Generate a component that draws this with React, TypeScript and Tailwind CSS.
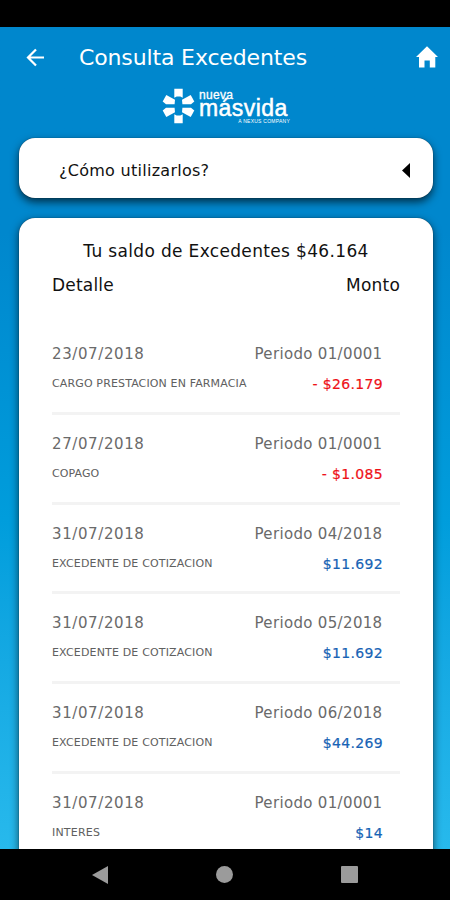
import React from "react";

type Entry = {
  date: string;
  period: string;
  detail: string;
  detailClass: string;
  amount: string;
  negative?: boolean;
};

const entries: Entry[] = [
  { date: "23/07/2018", period: "Periodo 01/0001", detail: "CARGO PRESTACION EN FARMACIA", detailClass: "tracking-[0.14px]", amount: "- $26.179", negative: true },
  { date: "27/07/2018", period: "Periodo 01/0001", detail: "COPAGO", detailClass: "tracking-[0.1px]", amount: "- $1.085", negative: true },
  { date: "31/07/2018", period: "Periodo 04/2018", detail: "EXCEDENTE DE COTIZACION", detailClass: "tracking-[0.16px]", amount: "$11.692" },
  { date: "31/07/2018", period: "Periodo 05/2018", detail: "EXCEDENTE DE COTIZACION", detailClass: "tracking-[0.16px]", amount: "$11.692" },
  { date: "31/07/2018", period: "Periodo 06/2018", detail: "EXCEDENTE DE COTIZACION", detailClass: "tracking-[0.16px]", amount: "$44.269" },
  { date: "31/07/2018", period: "Periodo 01/0001", detail: "INTERES", detailClass: "tracking-[0.2px]", amount: "$14" },
];

function Logo() {
  return (
    <div className="flex h-[36px] shrink-0 items-start justify-center gap-[4px] pl-[2px] text-white">
      <svg width="33" height="36" viewBox="0 0 33 36" fill="currentColor">
        <path d="M12.300 0.800h8.400v9l-2.400-1.300h-3.600l-2.400 1.300z" />
        <path d="M12.300 35.200h8.400v-9l-2.400 1.300h-3.600l-2.400-1.300z" />
        <path d="M4.300 7l8.700 4.700-.4 4.500H4L0.700 13.500z" />
        <path d="M28.700 7L20 11.700l.4 4.500H29l3.300-2.700z" />
        <path d="M4.300 29l8.700-4.700-.4-4.500H4L0.700 22.500z" />
        <path d="M28.700 29L20 24.300l.4-4.500H29l3.300 2.700z" />
      </svg>
      <div className="flex w-[91px] flex-col whitespace-nowrap font-['Liberation_Sans',sans-serif]">
        <span className="mt-[1px] h-[11px] text-[12px] leading-[12px] tracking-[0.3px] [-webkit-text-stroke:0.3px_white]">nueva</span>
        <span className="h-[19px] text-[23px] leading-[16px] tracking-[0.45px] [-webkit-text-stroke:0.5px_white]">másvida</span>
        <span className="self-end text-[5px] leading-[5px] tracking-[0.25px]">A NEXUS COMPANY</span>
      </div>
    </div>
  );
}

function Row({ entry }: { entry: Entry }) {
  return (
    <li className="flex h-[89.8px] shrink-0 flex-col border-b-[3px] border-[#f3f3f3] pt-[19px]">
      <div className="flex items-center justify-between pr-[17.5px] text-[15px] leading-[20px] text-[#6a6a6a]">
        <span className="tracking-[0.6px]">{entry.date}</span>
        <span className="tracking-[0.33px]">{entry.period}</span>
      </div>
      <div className="mt-[10px] flex items-center justify-between pr-[17px] leading-[20px]">
        <span className={`text-[11px] text-[#606060] ${entry.detailClass}`}>{entry.detail}</span>
        <span className={`text-[14px] tracking-[0.35px] [-webkit-text-stroke:0.2px_currentColor] ${entry.negative ? "text-[#ee1118]" : "text-[#1763b5]"}`}>{entry.amount}</span>
      </div>
    </li>
  );
}

export default function App() {
  return (
    <div className="flex h-[900px] w-[450px] flex-col overflow-hidden bg-black font-['DejaVu_Sans',sans-serif]">
      <div className="h-[27px] shrink-0 bg-black" />
      <main className="flex h-[822px] shrink-0 flex-col overflow-hidden bg-linear-to-b from-[#0087cd] from-25% via-[#009ddc] via-60% to-[#27b9ec]">
        <header className="flex h-[61px] shrink-0 items-center pr-[12px] pl-[26px] text-white">
          <svg width="19" height="19" viewBox="0 0 19 19" fill="none" stroke="currentColor" strokeWidth="2.200">
            <path d="M18 9.500H2.500M10 1.500l-8 8 8 8" />
          </svg>
          <h1 className="ml-[34px] flex-1 text-[22px] leading-[30px] tracking-[-0.14px]">Consulta Excedentes</h1>
          <svg className="-mt-[2px]" width="22" height="22" viewBox="0 0 22 22" fill="currentColor">
            <path d="M11 0.300L22 11h-2.700v10.500h-5.500v-7H8.500v7H3V11H0L11 0.300z" />
          </svg>
        </header>
        <Logo />
        <section className="mr-[17px] ml-[19px] mt-[14px] flex h-[60px] shrink-0 items-center justify-between rounded-[16px] bg-white pr-[23px] pl-[40px] shadow-[0_4px_8px_rgba(0,0,0,0.65),0_0_1px_rgba(0,0,0,0.7)]">
          <span className="mt-[5px] text-[16px] leading-[20px] tracking-[0.27px] text-[#111]">¿Cómo utilizarlos?</span>
          <svg className="mt-[5px]" width="8" height="15" viewBox="0 0 8 15">
            <path d="M8 0v15L0 7.500z" fill="#000" />
          </svg>
        </section>
        <section className="mr-[17px] ml-[19px] mt-[20px] flex h-[680px] shrink-0 flex-col rounded-[16px] bg-white pr-[33px] pl-[33px] shadow-[0_3px_8px_rgba(0,0,0,0.65),0_0_1px_rgba(0,0,0,0.7)]">
          <h2 className="mt-[22px] text-center text-[17px] leading-[22px] tracking-[0.34px] text-[#111]">Tu saldo de Excedentes $46.164</h2>
          <div className="mt-[12px] flex justify-between text-[17px] leading-[22px] tracking-[0.2px] text-[#111]">
            <span>Detalle</span>
            <span>Monto</span>
          </div>
          <ul className="mt-[29px] flex flex-col">
            {entries.map((entry, i) => (
              <Row key={i} entry={entry} />
            ))}
          </ul>
        </section>
      </main>
      <nav className="flex h-[51px] shrink-0 items-center justify-between bg-black pr-[92px] pl-[92px] text-[#9b9b9b]">
        <svg width="16" height="18" viewBox="0 0 16 18" fill="currentColor">
          <path d="M16 0v18L0 9z" />
        </svg>
        <div className="size-[17px] rounded-full bg-[#9b9b9b]" />
        <div className="size-[17px] rounded-[1px] bg-[#9b9b9b]" />
      </nav>
    </div>
  );
}
